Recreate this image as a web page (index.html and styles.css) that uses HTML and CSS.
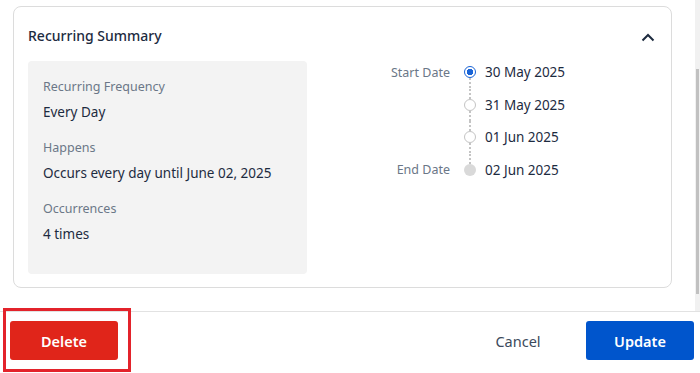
FILE: index.html
```html
<!DOCTYPE html>
<html lang="en">
<head>
    <meta charset="UTF-8">
    <meta name="viewport" content="width=device-width, initial-scale=1.0">
    <title>Edit Recurring Event</title>
    <link rel="stylesheet" href="styles.css">
</head>
<body>
    <div class="modal">
        <div class="modal-body">
            <div class="body-content">
                <section class="card">
                    <div class="card-head">
                        <h3 class="card-title">Recurring Summary</h3>
                        <svg class="chevron" width="14" height="9" viewBox="0 0 14 9">
                            <path d="M1.5 7.5 L7 2 L12.5 7.5" fill="none" stroke="#1d2b3f" stroke-width="2"/>
                        </svg>
                    </div>
                    <div class="card-content">
                        <div class="summary">
                            <div class="summary-label">Recurring Frequency</div>
                            <div class="summary-value">Every Day</div>
                            <div class="summary-label">Happens</div>
                            <div class="summary-value">Occurs every day until June 02, 2025</div>
                            <div class="summary-label">Occurrences</div>
                            <div class="summary-value">4 times</div>
                        </div>
                        <ul class="timeline">
                            <li class="step first">
                                <span class="step-label">Start Date</span>
                                <span class="step-mark"><i class="line"></i><i class="dot active"></i><i class="line"></i></span>
                                <span class="step-date">30 May 2025</span>
                            </li>
                            <li class="step">
                                <span class="step-label"></span>
                                <span class="step-mark"><i class="line"></i><i class="dot"></i><i class="line"></i></span>
                                <span class="step-date">31 May 2025</span>
                            </li>
                            <li class="step">
                                <span class="step-label"></span>
                                <span class="step-mark"><i class="line"></i><i class="dot"></i><i class="line"></i></span>
                                <span class="step-date">01 Jun 2025</span>
                            </li>
                            <li class="step last">
                                <span class="step-label">End Date</span>
                                <span class="step-mark"><i class="line"></i><i class="dot end"></i><i class="line"></i></span>
                                <span class="step-date">02 Jun 2025</span>
                            </li>
                        </ul>
                    </div>
                </section>
            </div>
            <div class="scrollbar"><div class="scroll-thumb"></div></div>
        </div>

        <div class="modal-footer">
            <div class="delete-wrap">
                <button class="btn btn-delete">Delete</button>
                <span class="highlight"></span>
            </div>
            <div class="actions">
                <button class="btn btn-cancel">Cancel</button>
                <button class="btn btn-update">Update</button>
            </div>
        </div>
    </div>
</body>
</html>
```

FILE: styles.css
```css
html, body {
    margin: 0;
    height: 100%;
    background-color: #fff;
    font-family: "Noto Sans", "Open Sans", Arial, sans-serif;
    color: #1d2b3f;
}
.modal {
    width: 700px;
    height: 373px;
    display: flex;
    flex-direction: column;
}
.modal-body {
    height: 311px;
    display: flex;
    overflow: hidden;
}
.body-content {
    flex: 1;
    padding: 6px 23px 0 13px;
}
/* fake scrollbar of the dialog body */
.scrollbar {
    width: 5px;
    background: #f1f1f1;
}
.scroll-thumb {
    width: 3px;
    height: 225px;
    margin: 69px 0 0 1px;
    background: #c1c1c1;
}
.card {
    border: 1px solid #dcdcdc;
    border-radius: 8px;
    padding: 14px 15px 13px 14px;
}
.card-head {
    height: 28px;
    display: flex;
    align-items: center;
    justify-content: space-between;
    margin-bottom: 12px;
}
.card-title {
    margin: 0;
    font-size: 14px;
    font-weight: 500;
    color: #1d2b3f;
}
.chevron {
    margin-right: 1px;
    margin-top: 4px;
}
.card-content {
    display: flex;
    align-items: flex-start;
}
.summary {
    width: 279px;
    flex-shrink: 0;
    background-color: #f3f3f3;
    border-radius: 4px;
    padding: 17px 15px 30px;
    box-sizing: border-box;
}
.summary-label {
    font-size: 12.5px;
    line-height: 18px;
    color: #6b7787;
    margin-top: 17px;
}
.summary-label:first-child {
    margin-top: 0;
}
.summary-value {
    font-size: 13.5px;
    line-height: 20px;
    margin-top: 6px;
    color: #1d2b3f;
}
.timeline {
    list-style: none;
    margin: -5px 0 0 20px;
    padding: 0;
}
.step {
    display: flex;
    align-items: stretch;
    height: 32.5px;
}
.step-label {
    width: 123px;
    margin-right: 14px;
    font-size: 12.5px;
    color: #6b7787;
    display: flex;
    align-items: center;
    justify-content: flex-end;
}
.step-mark {
    width: 12px;
    display: flex;
    flex-direction: column;
    align-items: center;
}
.line {
    flex: 1;
    width: 2px;
    background: repeating-linear-gradient(to bottom, #c4c4c4 0 2px, transparent 2px 4px);
}
.first .line:first-child,
.last .line:last-child {
    visibility: hidden;
}
.dot {
    width: 12px;
    height: 12px;
    border-radius: 50%;
    border: 1px solid #c4c4c4;
    background: #fff;
    box-sizing: border-box;
    flex-shrink: 0;
}
.dot.active {
    border-color: #1a64d6;
    background: radial-gradient(circle, #1a64d6 0 3px, #fff 3.5px);
}
.dot.end {
    border: none;
    background: #d9d9d9;
}
.step-date {
    margin-left: 9px;
    font-size: 13.5px;
    display: flex;
    align-items: center;
}
.modal-footer {
    flex: 1;
    border-top: 1px solid #e2e2e2;
    display: flex;
    justify-content: space-between;
    align-items: flex-start;
    padding: 9px 6px 0 10px;
}
.delete-wrap {
    position: relative;
}
/* red annotation box around the delete button */
.highlight {
    position: absolute;
    left: -7px;
    top: -13px;
    width: 128px;
    height: 64px;
    border: 3px solid #e3232b;
    box-sizing: border-box;
}
.actions {
    display: flex;
    gap: 14px;
}
.btn {
    width: 108px;
    height: 39px;
    border: none;
    border-radius: 3px;
    font-family: "Noto Sans", "Open Sans", Arial, sans-serif;
    font-size: 14.5px;
    font-weight: 600;
    cursor: pointer;
}
.btn-delete {
    background-color: #e0251a;
    color: #fff;
}
.btn-cancel {
    background: none;
    color: #3c4a5c;
    font-weight: 400;
}
.btn-update {
    background-color: #0055cc;
    color: #fff;
}
```
